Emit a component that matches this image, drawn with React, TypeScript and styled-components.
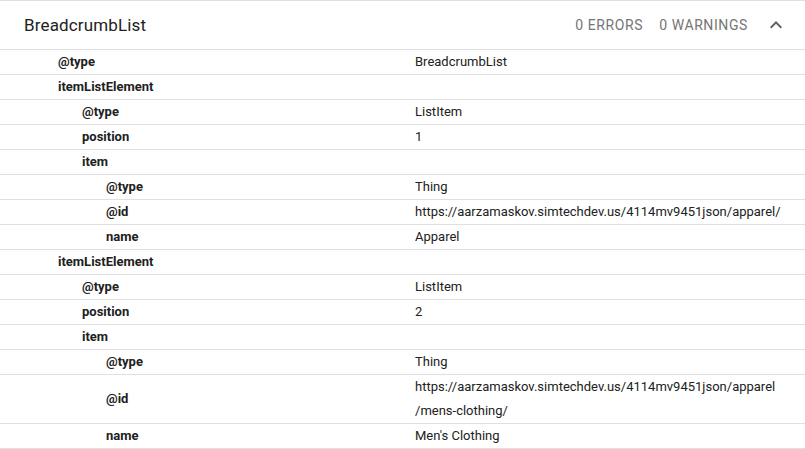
import React from 'react'
import styled, { createGlobalStyle } from 'styled-components'

const GlobalStyle = createGlobalStyle`
  html, body {
    margin: 0;
    padding: 0;
    background: #fff;
  }
  body {
    font-family: Roboto, "Noto Sans", Arial, sans-serif;
    color: #212121;
  }
`

const Card = styled.section`
  width: 805px;
  border-top: 1px solid #e0e0e0;
  background: #fff;
`

const Header = styled.div`
  height: 48px;
  display: flex;
  align-items: center;
  padding: 0 19px 0 24px;
  border-bottom: 1px solid #e0e0e0;
`

const Title = styled.div`
  flex: 1;
  font-size: 17px;
  letter-spacing: 0.15px;
  color: #212121;
`

const Count = styled.span`
  font-size: 14px;
  letter-spacing: 0.6px;
  color: #757575;
  text-transform: uppercase;
  margin-left: 16px;
`

const Toggle = styled.button`
  border: 0;
  background: none;
  padding: 0;
  margin-left: 18px;
  width: 20px;
  height: 20px;
  display: flex;
  align-items: center;
  justify-content: center;
  color: #616161;
  cursor: pointer;
`

const Row = styled.div`
  display: flex;
  border-bottom: 1px solid #e0e0e0;
  font-size: 13px;
  line-height: 24px;
`

const Key = styled.div<{ level: number }>`
  width: 415px;
  flex-shrink: 0;
  box-sizing: border-box;
  padding-left: ${({ level }) => 58 + level * 24}px;
  font-weight: 700;
  color: #212121;
  display: flex;
  align-items: center;
`

const Value = styled.div`
  flex: 1;
  padding-right: 20px;
  color: #212121;
  overflow-wrap: anywhere;
`

type Entry = { k: string; v?: string; level: number }

const entries: Entry[] = [
  { k: '@type', v: 'BreadcrumbList', level: 0 },
  { k: 'itemListElement', level: 0 },
  { k: '@type', v: 'ListItem', level: 1 },
  { k: 'position', v: '1', level: 1 },
  { k: 'item', level: 1 },
  { k: '@type', v: 'Thing', level: 2 },
  { k: '@id', v: 'https://aarzamaskov.simtechdev.us/4114mv9451json/apparel/', level: 2 },
  { k: 'name', v: 'Apparel', level: 2 },
  { k: 'itemListElement', level: 0 },
  { k: '@type', v: 'ListItem', level: 1 },
  { k: 'position', v: '2', level: 1 },
  { k: 'item', level: 1 },
  { k: '@type', v: 'Thing', level: 2 },
  { k: '@id', v: 'https://aarzamaskov.simtechdev.us/4114mv9451json/apparel/mens-clothing/', level: 2 },
  { k: 'name', v: "Men's Clothing", level: 2 },
]

// allow URLs to wrap before a path segment
function renderValue(v: string) {
  if (!v.startsWith('http')) return v
  const [scheme, rest] = v.split('://')
  const parts = rest.split('/')
  return (
    <>
      {scheme}://{parts[0]}
      {parts.slice(1).map((p, i) => (
        <React.Fragment key={i}>
          <wbr />/{p}
        </React.Fragment>
      ))}
    </>
  )
}

export default function App() {
  return (
    <>
      <GlobalStyle />
      <Card>
        <Header>
          <Title>BreadcrumbList</Title>
          <Count>0 errors</Count>
          <Count>0 warnings</Count>
          <Toggle aria-label="Collapse">
            <svg width="12" height="8" viewBox="0 0 12 8">
              <path d="M1.4 7.4 6 2.8l4.6 4.6L12 6 6 0 0 6z" fill="currentColor" />
            </svg>
          </Toggle>
        </Header>
        {entries.map((e, i) => (
          <Row key={'row-' + i}>
            <Key level={e.level}>{e.k}</Key>
            <Value>{e.v ? renderValue(e.v) : ''}</Value>
          </Row>
        ))}
      </Card>
    </>
  )
}
